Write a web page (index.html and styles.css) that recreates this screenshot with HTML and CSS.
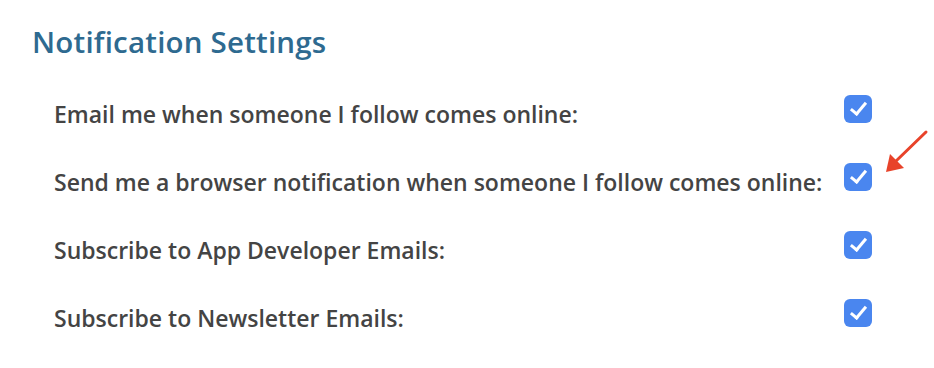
FILE: index.html
```html
<html>

<head>
    <link rel="stylesheet" href="styles.css">
</head>

<body>
    <div class="panel">
        <h2 class="title">Notification Settings</h2>
        <div class="settings">
            <label class="lbl" for="n1">Email me when someone I follow comes online:</label>
            <span class="box"><input type="checkbox" id="n1" checked /><span class="tick"></span></span>

            <label class="lbl" for="n2">Send me a browser notification when someone I follow comes online:</label>
            <span class="box"><input type="checkbox" id="n2" checked /><span class="tick"></span>
                <svg class="arrow" width="56" height="56" viewBox="0 0 56 56">
                    <line x1="46" y1="9" x2="15" y2="39" stroke="#e8432a" stroke-width="3" stroke-linecap="round" />
                    <polygon points="6,49 10,31 24,45" fill="#e8432a" />
                </svg>
            </span>

            <label class="lbl" for="n3">Subscribe to App Developer Emails:</label>
            <span class="box"><input type="checkbox" id="n3" checked /><span class="tick"></span></span>

            <label class="lbl" for="n4">Subscribe to Newsletter Emails:</label>
            <span class="box"><input type="checkbox" id="n4" checked /><span class="tick"></span></span>
        </div>
    </div>
</body>

</html>
```

FILE: styles.css
```css
body {
    margin: 0;
    background: #fff;
    font-family: "Open Sans", "DejaVu Sans", sans-serif;
}

.panel {
    padding: 22px 0 0 32px;
}

.title {
    margin: 0;
    font-size: 29.5px;
    font-weight: 600;
    color: #2e6a90;
    line-height: 40px;
    letter-spacing: 0.2px;
}

.settings {
    display: grid;
    grid-template-columns: 766px 28px;
    grid-auto-rows: 68px;
    column-gap: 24px;
    align-items: center;
    margin: 18px 0 0 22px;
}

.lbl {
    font-size: 23px;
    font-weight: 600;
    color: #444;
    white-space: nowrap;
}

.box {
    position: relative;
    width: 28px;
    height: 28px;
    margin-bottom: 10px;
}

.box input {
    position: absolute;
    opacity: 0;
    margin: 0;
}

.tick {
    display: block;
    width: 28px;
    height: 28px;
    border-radius: 6px;
    background: #4a86ef;
    position: relative;
}

.tick::after {
    content: "";
    position: absolute;
    left: 10px;
    top: 4px;
    width: 6px;
    height: 13px;
    border: solid #fff;
    border-width: 0 3px 3px 0;
    transform: rotate(40deg);
}

.arrow {
    position: absolute;
    left: 36px;
    top: -40px;
}
```
